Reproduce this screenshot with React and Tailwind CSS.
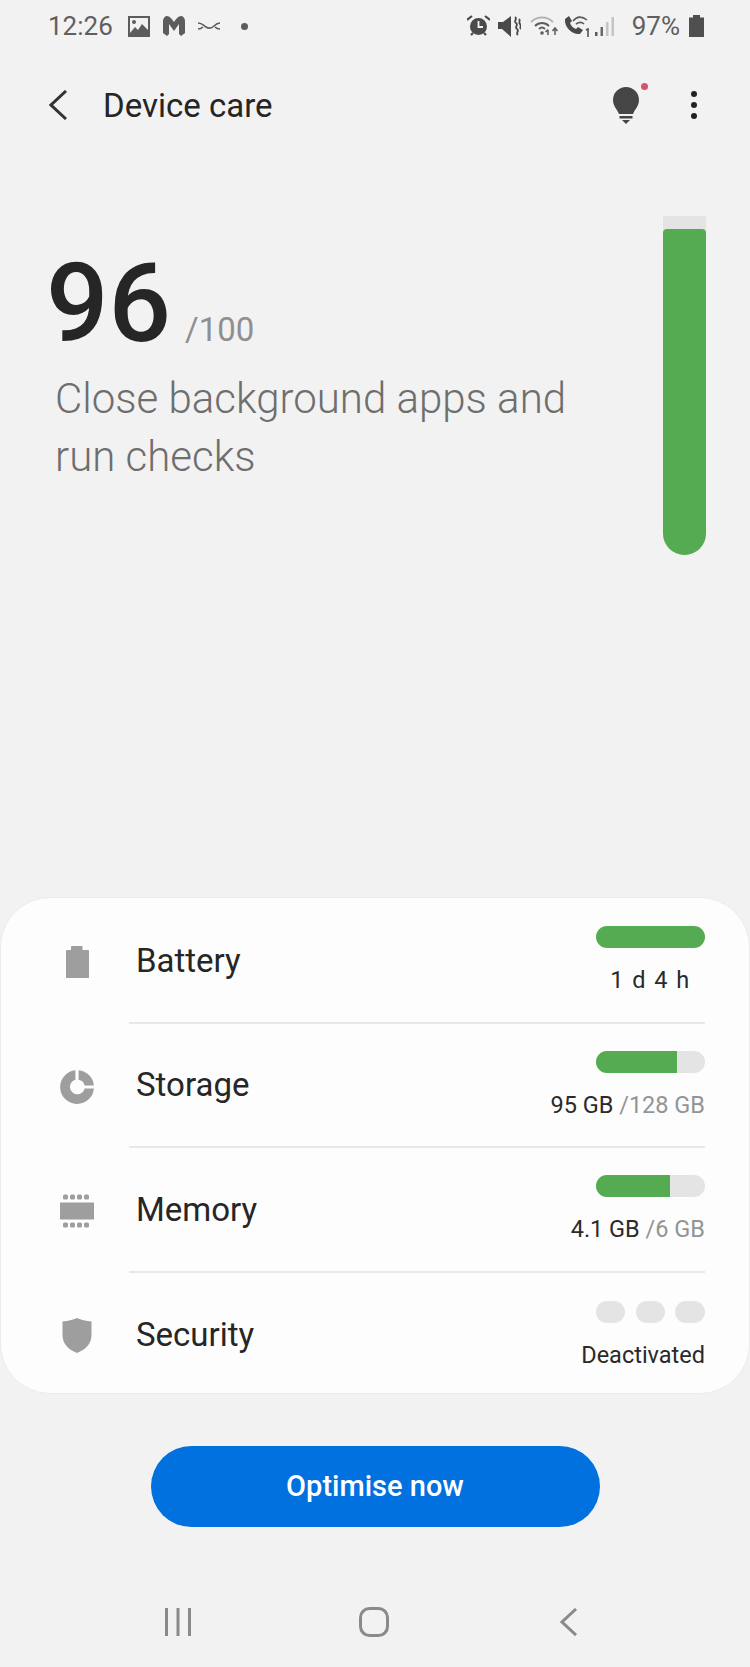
import React from "react";

const rows = [
  { name: "Battery", icon: <BatteryIcon />, fill: "w-full", value: "1 d 4 h", center: true },
  { name: "Storage", icon: <StorageIcon />, fill: "w-[81px]", value: "95 GB", total: "/128 GB" },
  { name: "Memory", icon: <MemoryIcon />, fill: "w-[74px]", value: "4.1 GB", total: "/6 GB" },
  { name: "Security", icon: <ShieldIcon />, value: "Deactivated", pills: true },
];

function BatteryIcon() {
  return (
    <svg width="24" height="32" viewBox="0 0 24 32" fill="#9e9e9e">
      <path d="M7 0h9.5a1 1 0 0 1 1 1v3H23a1 1 0 0 1 1 1v27H1V5a1 1 0 0 1 1-1h4V1a1 1 0 0 1 1-1z" />
    </svg>
  );
}

function StorageIcon() {
  return (
    <svg width="34" height="34" viewBox="0 0 34 34" fill="#9e9e9e">
      <path d="M15.4 0.2v9.6a7.4 7.4 0 1 0 9.2 8.6h9.3A16.9 16.9 0 1 1 15.4 0.2z" />
      <path d="M18.6 0.2A16.9 16.9 0 0 1 33.9 15.4h-9.3a7.4 7.4 0 0 0-6-5.7z" />
    </svg>
  );
}

function MemoryIcon() {
  return (
    <svg width="34" height="34" viewBox="0 0 34 34" fill="#9e9e9e">
      <rect x="0" y="8.5" width="34" height="17" />
      {[3, 10, 17, 24].map((x) => (
        <g key={x}>
          <rect x={x} y="0.5" width="5" height="5" rx="1.5" />
          <rect x={x} y="28.5" width="5" height="5" rx="1.5" />
        </g>
      ))}
    </svg>
  );
}

function ShieldIcon() {
  return (
    <svg width="30" height="35" viewBox="0 0 30 35" fill="#9e9e9e">
      <path d="M15 0c4 2 9 3 14.500 3.500V17c0 9-6 14.500-14.500 18C6.500 31.500 0.500 26 0.500 17V3.500C6 3 11 2 15 0z" />
    </svg>
  );
}

function StatusLeftIcons() {
  return (
    <div className="flex items-center">
      <svg className="ml-[15px]" width="22" height="21" viewBox="0 0 22 21">
        <rect x="0" y="0" width="22" height="21" fill="#5c5c5c" />
        <rect x="2" y="2" width="18" height="15" fill="#f2f2f2" />
        <circle cx="6" cy="6" r="2" fill="#5c5c5c" />
        <path d="M2 17l5-6 3 3 4-6 6 6v5H2z" fill="#5c5c5c" />
      </svg>
      <svg className="ml-[13px]" width="22" height="20" viewBox="0 0 22 20" fill="#5c5c5c">
        <path d="M0 5c0-3 2-5 4-5 2.500 0 5 3 7 6 2-3 4.500-6 7-6 2 0 4 2 4 5v12l-4 3-2-2V8l-5 7-5-7v10l-2 2-4-3z" />
      </svg>
      <svg className="ml-[13px]" width="23" height="10" viewBox="0 0 23 10" fill="none" stroke="#5c5c5c" strokeWidth="1.600">
        <path d="M0 2c4 0 5 2 8 4s5 2 8-1 4-3 6-3M0 8c2 0 4-1 5-2M17 6c1 1 3 2 5 2" />
      </svg>
      <span className="ml-[20px] w-[7px] h-[7px] rounded-full bg-[#5c5c5c]" />
    </div>
  );
}

function StatusRightIcons() {
  return (
    <div className="flex items-center">
      <svg width="23" height="22" viewBox="0 0 23 22">
        <path d="M0 5l5-4M23 5l-5-4M4 20l2-2M19 20l-2-2" stroke="#4a4a4a" strokeWidth="2.200" fill="none" />
        <circle cx="11.500" cy="11.500" r="8.500" fill="#4a4a4a" />
        <path d="M11.500 6v6h4.500" stroke="#f2f2f2" strokeWidth="1.800" fill="none" />
      </svg>
      <svg className="ml-[8px]" width="23" height="21" viewBox="0 0 23 21">
        <path d="M0 6h5l8-6v21l-9-8H0z" fill="#4a4a4a" />
        <path d="M17 1c3 2-2 4 1 6s-2 4 1 6-2 4 1 6M21 3c2 2-1 3 1 5s-1 3 1 5" stroke="#4a4a4a" strokeWidth="1.800" fill="none" />
      </svg>
      <svg className="ml-[9px]" width="29" height="22" viewBox="0 0 29 22" fill="none">
        <path d="M1 7c6-6 16-6 22 0" stroke="#b5b5b5" strokeWidth="1.800" />
        <path d="M5 11c4-4 10-4 14 0M9 14c2-2 4-2 6 0" stroke="#5c5c5c" strokeWidth="1.800" />
        <circle cx="12" cy="18" r="1.800" fill="#5c5c5c" />
        <path d="M18 15v5M15.500 17l2.500-2.500" stroke="#5c5c5c" strokeWidth="1.500" />
        <path d="M25 20v-7M22.500 16l2.500-3 2.500 3" stroke="#5c5c5c" strokeWidth="1.500" />
      </svg>
      <svg className="ml-[5px]" width="26" height="22" viewBox="0 0 26 22" fill="none">
        <path d="M1 4l4-3 3 5-2 2c1 3 3 5 6 6l2-2 5 3-3 4C8 20 0 12 1 4z" fill="#4a4a4a" />
        <path d="M9 6c4-5 9-5 14-1M12 9c3-2 6-2 8 0" stroke="#5c5c5c" strokeWidth="1.600" />
        <path d="M22 15l2-1v8" stroke="#4a4a4a" strokeWidth="1.500" />
      </svg>
      <svg className="ml-[5px]" width="20" height="20" viewBox="0 0 20 20">
        <rect x="0" y="16" width="2.500" height="4" fill="#5c5c5c" />
        <rect x="5.500" y="11" width="2.500" height="9" fill="#6a6a6a" />
        <rect x="11" y="6" width="2.500" height="14" fill="#c4c4c4" />
        <rect x="16.500" y="1" width="2.500" height="19" fill="#c4c4c4" />
      </svg>
      <span className="ml-[17px] text-[26px] leading-none text-[#5f5f5f]">97%</span>
      <svg className="ml-[9px]" width="15" height="22" viewBox="0 0 15 22" fill="#4f4f4f">
        <path d="M4 0h7v2.500h4V22H0V2.500h4z" />
      </svg>
    </div>
  );
}

function Row({ row, last }) {
  return (
    <div className="flex h-[124.500px]">
      <div className="w-[128px] shrink-0 flex items-center justify-center pl-[24px] pt-[2px]">{row.icon}</div>
      <div className={`flex-1 mr-[44px] flex items-center justify-between ${last ? "" : "border-b-2 border-[#e8e8e8]"}`}>
        <span className="pl-[7px] text-[33px] leading-none text-[#262626]">{row.name}</span>
        <div className="w-[109px] flex flex-col items-end">
          {row.pills ? (
            <div className="w-full flex justify-between">
              <span className="w-[29px] h-[22px] rounded-full bg-[#e4e4e4]" />
              <span className="w-[29px] h-[22px] rounded-full bg-[#e4e4e4]" />
              <span className="w-[30px] h-[22px] rounded-full bg-[#e4e4e4]" />
            </div>
          ) : (
            <div className="w-full h-[22px] rounded-full bg-[#e4e4e4] overflow-hidden">
              <div className={`h-full bg-[#55ab52] ${row.fill}`} />
            </div>
          )}
          <div
            className={`mt-[18px] text-[23.500px] leading-[28px] whitespace-nowrap text-[#2a2a2a] ${
              row.center ? "self-center tracking-[1.500px]" : ""
            }`}
          >
            {row.value}
            {row.total && <span className="text-[#949494]"> {row.total}</span>}
          </div>
        </div>
      </div>
    </div>
  );
}

export default function App() {
  return (
    <div className="w-[750px] h-[1667px] bg-[#f2f2f2] flex flex-col overflow-hidden font-['Roboto',sans-serif]">
      {/* Status bar */}
      <div className="h-[52px] shrink-0 flex items-center justify-between pl-[48px] pr-[46px]">
        <div className="flex items-center">
          <span className="text-[26px] leading-none text-[#5f5f5f]">12:26</span>
          <StatusLeftIcons />
        </div>
        <StatusRightIcons />
      </div>

      {/* Header */}
      <div className="h-[106px] shrink-0 flex items-center pl-[49px] pr-[53px]">
        <svg width="18" height="30" viewBox="0 0 18 30" fill="none" stroke="#333" strokeWidth="3">
          <path d="M17 1L2 15l15 14" />
        </svg>
        <span className="ml-[36px] text-[33px] leading-none text-[#252525]">Device care</span>
        <div className="ml-auto relative mr-[52px]">
          <svg width="26" height="37" viewBox="0 0 26 37" fill="#454545" className="block">
            <path d="M13 0a13 13 0 0 1 13 13c0 6-4 9-6 14H6C4 22 0 19 0 13A13 13 0 0 1 13 0z" />
            <path d="M6.500 29h13v2.500h-13zM9 33h8l-4 4z" />
          </svg>
          <span className="absolute -top-[4px] -right-[9px] w-[7px] h-[7px] rounded-full bg-[#d9536f]" />
        </div>
        <div className="flex flex-col gap-[5px]">
          <span className="w-[6px] h-[6px] rounded-full bg-[#222]" />
          <span className="w-[6px] h-[6px] rounded-full bg-[#222]" />
          <span className="w-[6px] h-[6px] rounded-full bg-[#222]" />
        </div>
      </div>

      {/* Score */}
      <div className="h-[739px] shrink-0 flex justify-between pr-[44px]">
        <div className="pl-[46px] pt-[91px]">
          <div className="flex items-baseline">
            <span className="text-[110px] leading-[110px] font-medium text-[#262626]">96</span>
            <span className="ml-[14px] text-[33px] leading-none text-[#8f8f8f]">/100</span>
          </div>
          <p className="mt-[11px] pl-[9px] text-[42px] leading-[58px] font-light text-[#6e6e6e]">
            Close background apps and
            <br />
            run checks
          </p>
        </div>
        <div className="mt-[58px] w-[43px] h-[339px] rounded-b-full rounded-t-[22px] bg-[#e4e4e4] flex flex-col justify-end overflow-hidden">
          <div className="h-[326px] bg-[#55ab52] rounded-t-[4px]" />
        </div>
      </div>

      {/* Summary card */}
      <div className="h-[497px] shrink-0 bg-[#fdfdfd] rounded-[50px] border border-[#ebebeb] py-[1px]">
        {rows.map((row, i) => (
          <Row key={row.name} row={row} last={i === rows.length - 1} />
        ))}
      </div>

      {/* Action */}
      <div className="mt-[52px] flex justify-center">
        <button className="w-[449px] h-[81px] rounded-full bg-[#0071de] text-white text-[29px] font-medium">
          Optimise now
        </button>
      </div>

      {/* Nav bar */}
      <div className="mt-[80px] flex items-center pl-[165px]">
        <svg width="26" height="28" viewBox="0 0 26 28" fill="#8a8a8a">
          <rect x="0" y="0" width="3" height="28" />
          <rect x="11.500" y="0" width="3" height="28" />
          <rect x="23" y="0" width="3" height="28" />
        </svg>
        <svg className="ml-[168px]" width="30" height="30" viewBox="0 0 30 30" fill="none" stroke="#8a8a8a" strokeWidth="3">
          <rect x="1.500" y="1.500" width="27" height="27" rx="9" />
        </svg>
        <svg className="ml-[171px]" width="18" height="28" viewBox="0 0 18 28" fill="none" stroke="#8a8a8a" strokeWidth="3">
          <path d="M16 1L2 14l14 13" />
        </svg>
      </div>
    </div>
  );
}
